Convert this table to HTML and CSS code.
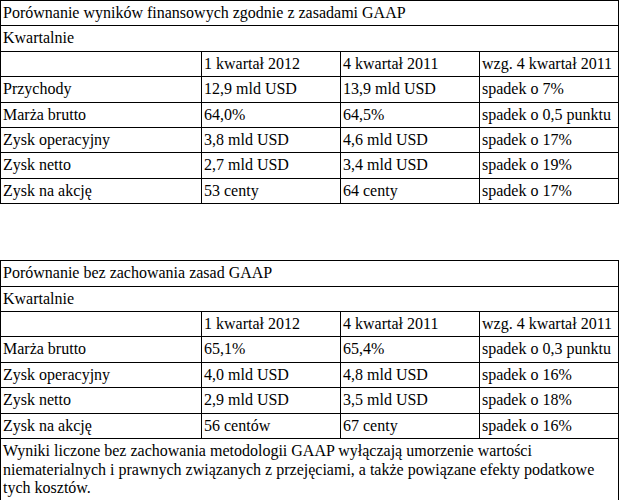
FILE: index.html
```html
<!DOCTYPE html>
<html lang="pl">
<head>
<meta charset="utf-8">
<link rel="stylesheet" href="styles.css">
</head>
<body>
<table class="fin">
  <colgroup><col class="c1"><col class="c2"><col class="c3"><col class="c4"></colgroup>
  <tr><td colspan="4">Porównanie wyników finansowych zgodnie z zasadami GAAP</td></tr>
  <tr><td colspan="4">Kwartalnie</td></tr>
  <tr><td></td><td>1 kwartał 2012</td><td>4 kwartał 2011</td><td>wzg. 4 kwartał 2011</td></tr>
  <tr><td>Przychody</td><td>12,9 mld USD</td><td>13,9 mld USD</td><td>spadek o 7%</td></tr>
  <tr><td>Marża brutto</td><td>64,0%</td><td>64,5%</td><td>spadek o 0,5 punktu</td></tr>
  <tr><td>Zysk operacyjny</td><td>3,8 mld USD</td><td>4,6 mld USD</td><td>spadek o 17%</td></tr>
  <tr><td>Zysk netto</td><td>2,7 mld USD</td><td>3,4 mld USD</td><td>spadek o 19%</td></tr>
  <tr><td>Zysk na akcję</td><td>53 centy</td><td>64 centy</td><td>spadek o 17%</td></tr>
</table>
<table class="fin second">
  <colgroup><col class="c1"><col class="c2"><col class="c3"><col class="c4"></colgroup>
  <tr><td colspan="4">Porównanie bez zachowania zasad GAAP</td></tr>
  <tr><td colspan="4">Kwartalnie</td></tr>
  <tr><td></td><td>1 kwartał 2012</td><td>4 kwartał 2011</td><td>wzg. 4 kwartał 2011</td></tr>
  <tr><td>Marża brutto</td><td>65,1%</td><td>65,4%</td><td>spadek o 0,3 punktu</td></tr>
  <tr><td>Zysk operacyjny</td><td>4,0 mld USD</td><td>4,8 mld USD</td><td>spadek o 16%</td></tr>
  <tr><td>Zysk netto</td><td>2,9 mld USD</td><td>3,5 mld USD</td><td>spadek o 18%</td></tr>
  <tr><td>Zysk na akcję</td><td>56 centów</td><td>67 centy</td><td>spadek o 16%</td></tr>
  <tr><td colspan="4">Wyniki liczone bez zachowania metodologii GAAP wyłączają umorzenie wartości niematerialnych i prawnych związanych z przejęciami, a także powiązane efekty podatkowe tych kosztów.</td></tr>
</table>
</body>
</html>
```
FILE: styles.css
```css
html, body {
  margin: 0;
  padding: 0;
  background: #fff;
}
body {
  font-family: "Liberation Serif", "Times New Roman", serif;
  font-size: 16px;
  line-height: 18.4px;
  color: #000;
}
.fin {
  border-collapse: collapse;
  table-layout: fixed;
  width: 618px;
}
.fin td {
  border: 1px solid #000;
  padding: 3px 2px;
  text-align: left;
  vertical-align: top;
  white-space: normal;
}
.c1 { width: 201px; }
.c2 { width: 139px; }
.c3 { width: 139px; }
.c4 { width: 139px; }
.second {
  margin-top: 56px;
}
```
